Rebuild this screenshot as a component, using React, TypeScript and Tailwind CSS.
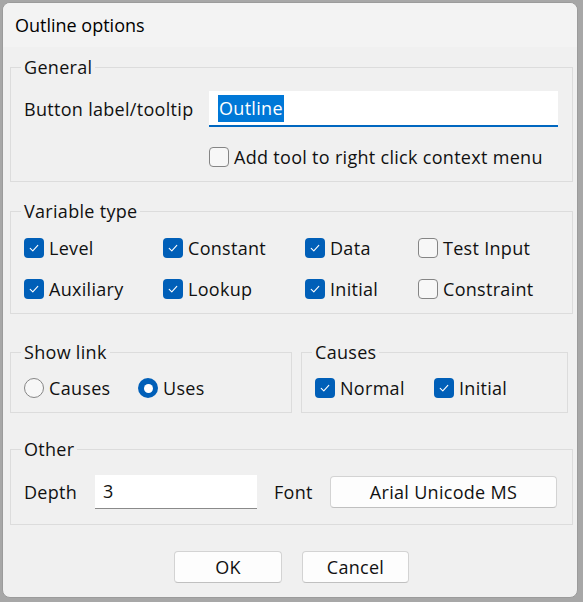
import React from 'react';

const FONT = { fontFamily: '"Open Sans", "Noto Sans", sans-serif' };

function Check({ checked }: { checked: boolean }) {
  if (checked) {
    return (
      <span className="w-[20px] h-[20px] rounded-[4px] bg-[#005fb8] flex items-center justify-center shrink-0">
        <svg width="12" height="12" viewBox="0 0 12 12" fill="none">
          <path d="M2.2 6.4 L4.8 8.8 L9.8 3.4" stroke="#ffffff" strokeWidth="1.1" strokeLinecap="round" strokeLinejoin="round" />
        </svg>
      </span>
    );
  }
  return <span className="w-[20px] h-[20px] rounded-[4px] border border-[#858585] bg-[#f7f7f7] shrink-0" />;
}

function CheckItem({ label, checked }: { label: string; checked: boolean }) {
  return (
    <div className="flex items-center gap-[5px] h-[20px]">
      <Check checked={checked} />
      <span className="leading-[20px] whitespace-nowrap">{label}</span>
    </div>
  );
}

function Radio({ label, checked }: { label: string; checked: boolean }) {
  return (
    <div className="flex items-center gap-[5px] h-[20px]">
      {checked ? (
        <span className="w-[20px] h-[20px] rounded-full bg-[#005fb8] flex items-center justify-center shrink-0">
          <span className="w-[9px] h-[9px] rounded-full bg-white" />
        </span>
      ) : (
        <span className="w-[20px] h-[20px] rounded-full border border-[#858585] bg-[#f7f7f7] shrink-0" />
      )}
      <span className="leading-[20px]">{label}</span>
    </div>
  );
}

function Group({ title, className, children }: { title: string; className?: string; children: React.ReactNode }) {
  return (
    <fieldset className={`border border-[#dcdcdc] px-[13px] pb-[14px] ${className ?? ''}`}>
      <legend className="px-[3px] -ml-[3px] leading-[22px]">{title}</legend>
      {children}
    </fieldset>
  );
}

function Button({ label, className }: { label: string; className?: string }) {
  return (
    <div
      className={`h-[32px] rounded-[4px] bg-[#fdfdfd] border border-[#d3d3d3] border-b-[#c0c0c0] flex items-center justify-center ${className ?? ''}`}
    >
      {label}
    </div>
  );
}

export default function App() {
  const varTypes: [string, boolean][] = [
    ['Level', true],
    ['Constant', true],
    ['Data', true],
    ['Test Input', false],
    ['Auxiliary', true],
    ['Lookup', true],
    ['Initial', true],
    ['Constraint', false],
  ];

  return (
    <div
      className="w-[583px] h-[602px] bg-[#a7a7a7] pt-[2px] pl-[2px] overflow-hidden text-[18px] tracking-[0.3px] text-[#111111]"
      style={FONT}
    >
      <div className="w-[576px] h-[596px] rounded-[8px] bg-[#f0f0f0] border border-[#9b9b9b] overflow-hidden flex flex-col">
        {/* title bar */}
        <div className="h-[44px] bg-[#f3f3f3] flex items-center pl-[12px] text-[18px] tracking-normal text-black shrink-0">
          Outline options
        </div>

        <div className="flex flex-col pl-[7px] pr-[4px] pt-[9px]">
          <Group title="General">
            <div className="flex items-center mt-[13px]">
              <span className="w-[185px] whitespace-nowrap">Button label/tooltip</span>
              <div className="w-[349px] h-[36px] bg-white border-b-2 border-[#0067c0] flex items-center pl-[9px]">
                <span className="bg-[#0078d7] text-white leading-[27px] px-[1px]">Outline</span>
              </div>
            </div>
            <div className="mt-[20px] pl-[185px]">
              <CheckItem label="Add tool to right click context menu" checked={false} />
            </div>
          </Group>

          <Group title="Variable type" className="mt-[18px]">
            <div className="grid grid-cols-[139px_142px_113px_1fr] gap-y-[21px] mt-[16px]">
              {varTypes.map(([l, c]) => (
                <CheckItem key={l} label={l} checked={c} />
              ))}
            </div>
          </Group>

          <div className="flex gap-[9px] mt-[27px]">
            <Group title="Show link" className="w-[282px]">
              <div className="flex mt-[15px]">
                <div className="w-[114px]">
                  <Radio label="Causes" checked={false} />
                </div>
                <Radio label="Uses" checked={true} />
              </div>
            </Group>
            <Group title="Causes" className="w-[267px]">
              <div className="flex mt-[15px]">
                <div className="w-[119px]">
                  <CheckItem label="Normal" checked={true} />
                </div>
                <CheckItem label="Initial" checked={true} />
              </div>
            </Group>
          </div>

          <Group title="Other" className="mt-[25px] pb-[15px]">
            <div className="flex items-center mt-[15px]">
              <span className="w-[71px]">Depth</span>
              <div className="w-[162px] h-[34px] bg-white border-b border-[#8a8a8a] flex items-center pl-[8px]">3</div>
              <span className="ml-[17px] w-[56px]">Font</span>
              <Button label="Arial Unicode MS" className="w-[227px]" />
            </div>
          </Group>

          <div className="flex justify-center gap-[20px] mt-[26px]">
            <Button label="OK" className="w-[108px]" />
            <Button label="Cancel" className="w-[107px]" />
          </div>
        </div>
      </div>
    </div>
  );
}
